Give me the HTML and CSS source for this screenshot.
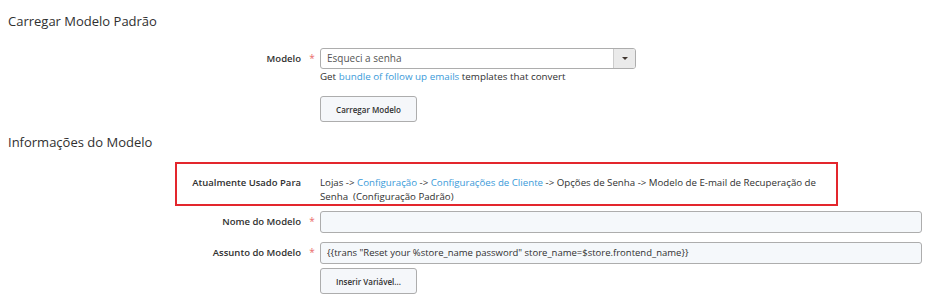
FILE: index.html
```html
<!DOCTYPE html>
<html lang="pt">
<head>
<meta charset="utf-8">
<link rel="stylesheet" href="styles.css">
</head>
<body>
<div class="page">
  <h2 class="section-title">Carregar Modelo Padrão</h2>
  <div class="row row-select">
    <label class="label">Modelo</label>
    <span class="req">*</span>
    <div class="control">
      <div class="select">
        <span class="select-value">Esqueci a senha</span>
        <span class="select-btn"><span class="caret"></span></span>
      </div>
      <div class="note">Get <a href="#">bundle of follow up emails</a> templates that convert</div>
      <button class="btn btn-load">Carregar Modelo</button>
    </div>
  </div>

  <h2 class="section-title section-title-2">Informações do Modelo</h2>
  <div class="highlight">
    <div class="row row-used">
      <span class="label">Atualmente Usado Para</span>
      <span class="req"></span>
      <div class="control value">Lojas -&gt; <a href="#">Configuração</a> -&gt; <a href="#">Configurações de Cliente</a> -&gt; Opções de Senha -&gt; Modelo de E-mail de Recuperação de Senha &nbsp;(Configuração Padrão)</div>
    </div>
  </div>
  <div class="row row-input">
    <label class="label">Nome do Modelo</label>
    <span class="req">*</span>
    <div class="control"><div class="input"></div></div>
  </div>
  <div class="row row-input row-subject">
    <label class="label">Assunto do Modelo</label>
    <span class="req">*</span>
    <div class="control">
      <div class="input">{{trans "Reset your %store_name password" store_name=$store.frontend_name}}</div>
      <button class="btn btn-var">Inserir Variável...</button>
    </div>
  </div>
</div>
</body>
</html>
```
FILE: styles.css
```css
* { box-sizing: border-box; }
html, body { margin: 0; padding: 0; background: #fff; }
body {
  font-family: "Open Sans", "DejaVu Sans", sans-serif;
  color: #303030;
  width: 928px;
  height: 298px;
  overflow: hidden;
}
.page { padding: 0 6px 0 8px; }
.section-title {
  margin: 0;
  padding-top: 11px;
  font-size: 13px;
  font-weight: 400;
  line-height: 20px;
  color: #303030;
}
.section-title-2 { padding-top: 10px; }
.row {
  display: grid;
  grid-template-columns: 293px 19px 1fr;
  align-items: start;
}
.row-select { margin-top: 17px; }
.label {
  text-align: right;
  font-size: 9.5px;
  font-weight: 600;
  line-height: 21px;
  color: #303030;
}
.req {
  font-size: 10px;
  color: #ea6a6a;
  line-height: 21px;
  text-align: center;
  padding-left: 3px;
}
.select {
  display: flex;
  width: 316px;
  height: 21px;
  border: 1px solid #adadad;
  border-radius: 3px;
  background: #fff;
}
.select-value {
  flex: 1;
  font-size: 10px;
  line-height: 19px;
  padding-left: 6px;
  color: #555;
}
.select-btn {
  width: 22px;
  border-left: 1px solid #ccc;
  background: #eaeaea;
  border-radius: 0 2px 2px 0;
  display: flex;
  align-items: center;
  justify-content: center;
}
.caret {
  width: 0; height: 0;
  border-left: 3px solid transparent;
  border-right: 3px solid transparent;
  border-top: 3px solid #41362f;
}
.note {
  font-size: 9.8px;
  line-height: 14px;
  margin-top: 1px;
  color: #303030;
}
a { color: #3a9ad9; text-decoration: none; }
.btn {
  display: block;
  width: 97px;
  height: 26px;
  border: 1px solid #adadad;
  border-radius: 3px;
  background: #f5f7fa;
  font-family: inherit;
  font-size: 8px;
  font-weight: 600;
  color: #303030;
  padding: 0;
}
.btn-load { margin-top: 12px; }
.highlight {
  margin-top: 10px;
  margin-left: 167px;
  width: 663px;
  height: 44px;
  border: 2px solid #e3262d;
}
.row-used {
  grid-template-columns: 124px 19px 1fr;
  padding-top: 12px;
}
.row-used .label { line-height: 14px; }
.value {
  font-size: 9.7px;
  line-height: 14px;
  color: #303030;
  padding-right: 8px;
}
.row-input { margin-top: 5px; }
.row-subject { margin-top: 9px; }
.input {
  width: 602px;
  height: 22px;
  border: 1px solid #adadad;
  border-radius: 3px;
  background: #f5f8fb;
  font-size: 9.5px;
  line-height: 20px;
  padding-left: 6px;
  color: #303030;
}
.btn-var { margin-top: 4px; }
```
